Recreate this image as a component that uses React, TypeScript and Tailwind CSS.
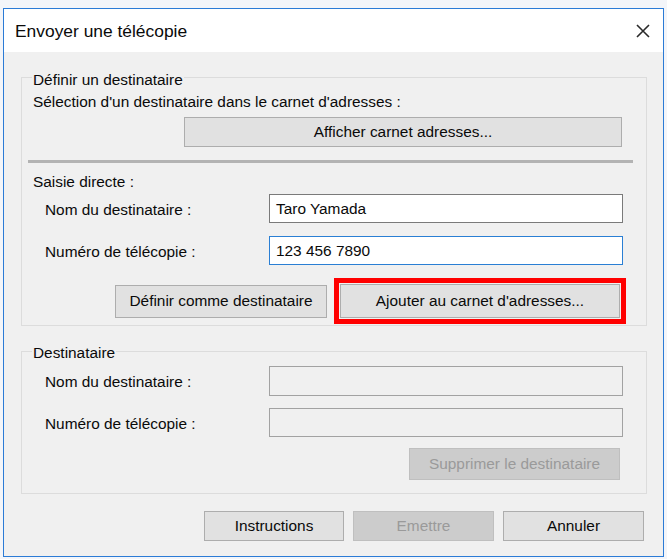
import React from "react";

const btn =
  "flex items-center justify-center bg-[#e1e1e1] border border-[#adadad] text-[#0a0a0a]";
const btnDisabled =
  "flex items-center justify-center bg-[#cccccc] border border-[#bfbfbf] text-[#9a9a9a]";

function Field({
  label,
  value,
  focused,
  disabled,
  mt,
  h,
}: {
  label: string;
  value?: string;
  focused?: boolean;
  disabled?: boolean;
  mt: string;
  h: string;
}) {
  const border = focused
    ? "border-[#2a7fd4]"
    : disabled
    ? "border-[#a2a2a2]"
    : "border-[#7a7a7a]";
  return (
    <div className={`flex items-center pl-[23px] ${mt}`}>
      <div className="w-[224px] leading-[18px] pt-[2px]">{label}</div>
      <div
        className={`w-[354px] ${h} border ${border} ${
          disabled ? "bg-[#f0f0f0]" : "bg-white"
        } flex items-center pl-[6px] leading-[18px]`}
      >
        {value}
      </div>
    </div>
  );
}

export default function App() {
  return (
    <div
      className="w-[667px] h-[559px] bg-[#f3f5f9] pt-[8px] pl-[3px] text-[15.4px] text-[#0a0a0a]"
      style={{ fontFamily: '"Liberation Sans", Arial, sans-serif' }}
    >
      <div className="w-[661px] h-[549px] border border-[#2b7bd6] bg-[#f0f0f0] flex flex-col">
        {/* Title bar */}
        <div className="h-[43px] bg-white flex items-center justify-between pl-[11px] pr-[13px] shrink-0">
          <span className="text-[17.4px] leading-[20px] text-[#0a0a0a]">
            Envoyer une télécopie
          </span>
          <svg width="14" height="14" viewBox="0 0 14 14">
            <path
              d="M1 1 L13 13 M13 1 L1 13"
              stroke="#2a2a2a"
              strokeWidth="1.6"
              fill="none"
            />
          </svg>
        </div>

        {/* Content */}
        <div className="flex flex-col pl-[17px]">
          {/* Group 1 */}
          <div className="mt-[25px] w-[626px] border border-[#dcdcdc] flex flex-col pb-[1px]">
            <div className="-mt-[7px] ml-[10px] px-[1px] w-fit bg-[#f0f0f0] leading-[18px]">
              Définir un destinataire
            </div>
            <div className="mt-[4px] pl-[11px] leading-[18px]">
              Sélection d'un destinataire dans le carnet d'adresses :
            </div>
            <div className={`${btn} mt-[6px] ml-[162px] w-[438px] h-[30px]`}>
              Afficher carnet adresses...
            </div>
            <div className="mt-[13px] ml-[6px] w-[605px] h-[3px] bg-[#b3b3b3]" />
            <div className="mt-[10px] pl-[11px] leading-[18px]">
              Saisie directe :
            </div>
            <Field
              label="Nom du destinataire :"
              value="Taro Yamada"
              mt="mt-[3px]"
              h="h-[29px]"
            />
            <Field
              label="Numéro de télécopie :"
              value="123 456 7890"
              focused
              mt="mt-[13px]"
              h="h-[29px]"
            />
            <div className="mt-[13px] ml-[93px] flex items-center gap-[7px]">
              <div className={`${btn} w-[212px] h-[33px]`}>
                Définir comme destinataire
              </div>
              <div className="border-[5px] border-[#ff0000] p-[1px]">
                <div className={`${btn} w-[280px] h-[34px]`}>
                  Ajouter au carnet d'adresses...
                </div>
              </div>
            </div>
          </div>

          {/* Group 2 */}
          <div className="mt-[25px] w-[626px] border border-[#dcdcdc] flex flex-col pb-[13px]">
            <div className="-mt-[8px] ml-[10px] px-[1px] w-fit bg-[#f0f0f0] leading-[18px]">
              Destinataire
            </div>
            <Field
              label="Nom du destinataire :"
              disabled
              mt="mt-[4px]"
              h="h-[30px]"
            />
            <Field
              label="Numéro de télécopie :"
              disabled
              mt="mt-[12px]"
              h="h-[29px]"
            />
            <div className={`${btnDisabled} mt-[11px] ml-[387px] w-[211px] h-[32px]`}>
              Supprimer le destinataire
            </div>
          </div>

          {/* Bottom buttons */}
          <div className="mt-[17px] flex justify-end gap-[9px] pr-[19px]">
            <div className={`${btn} w-[140px] h-[30px]`}>Instructions</div>
            <div className={`${btnDisabled} w-[141px] h-[30px]`}>Emettre</div>
            <div className={`${btn} w-[141px] h-[30px]`}>Annuler</div>
          </div>
        </div>
      </div>
    </div>
  );
}
